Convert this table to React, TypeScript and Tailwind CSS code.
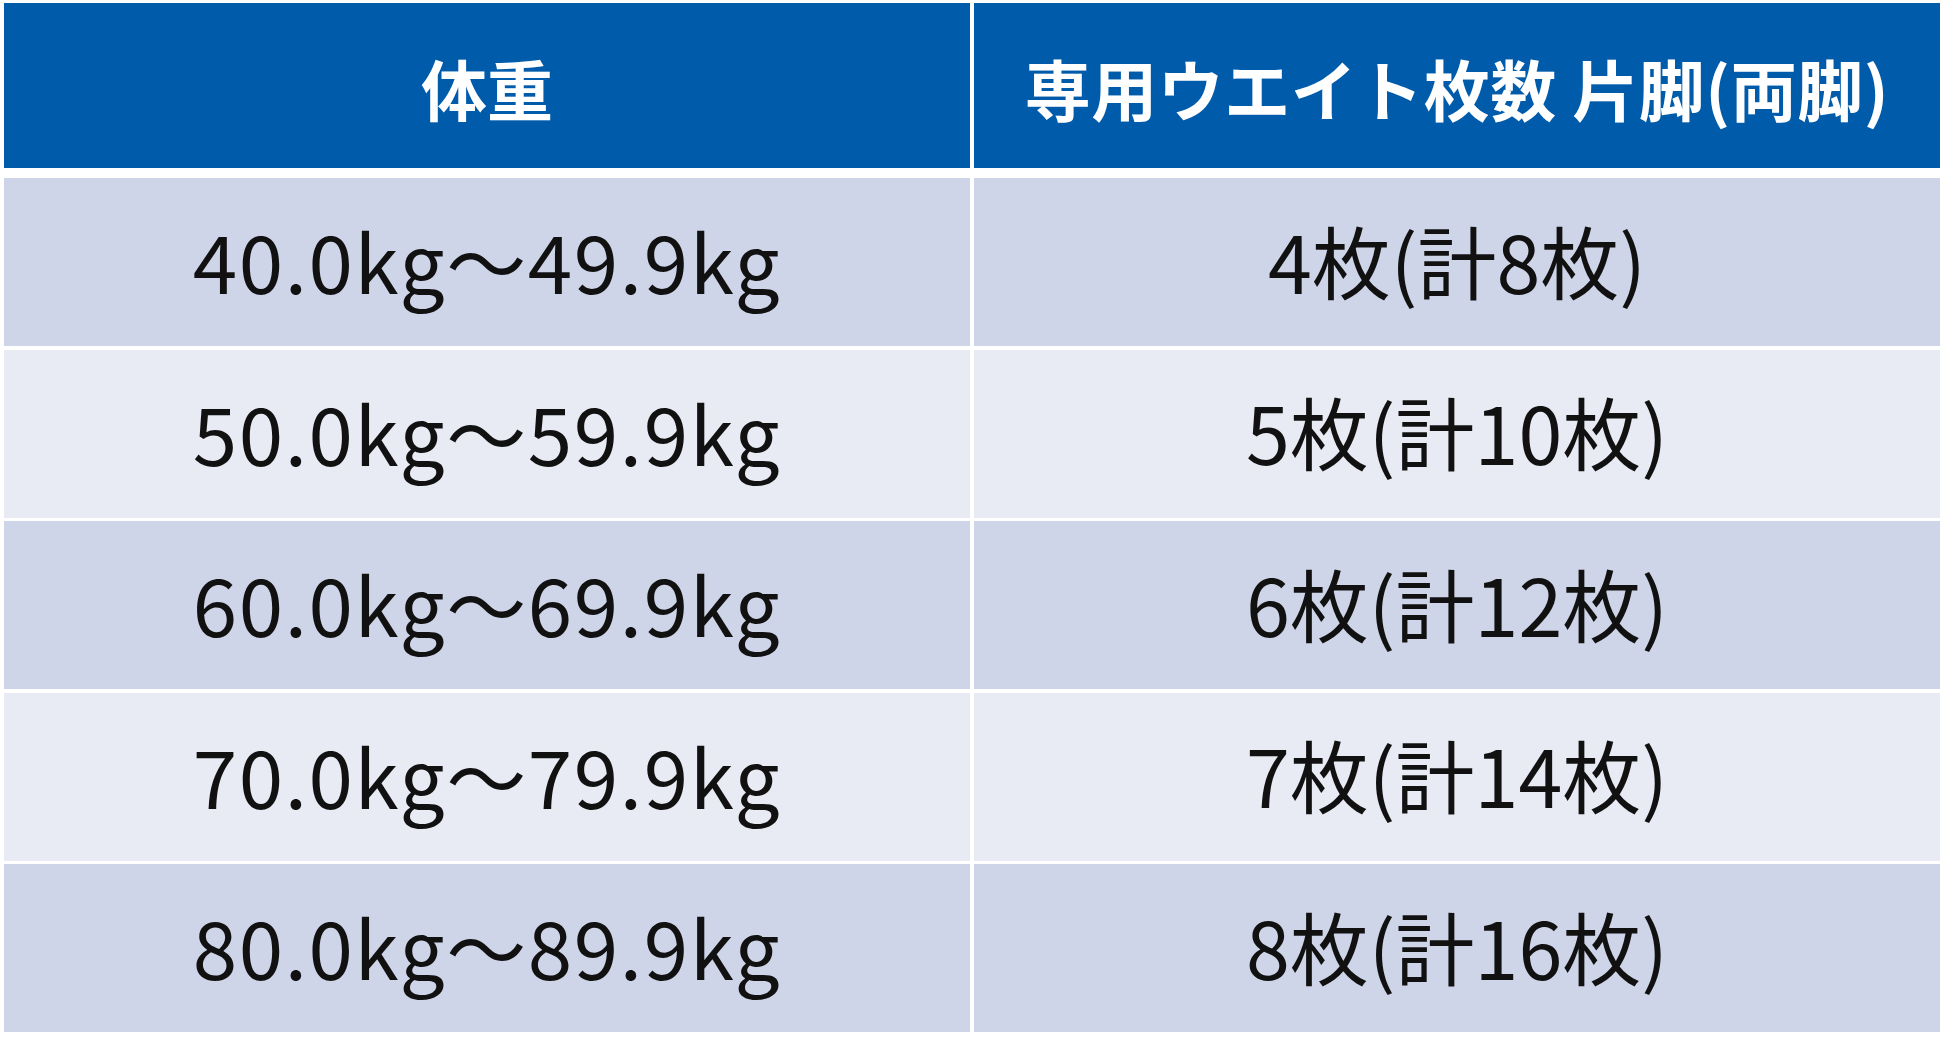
import React from "react";

const rows = [
  { weight: "40.0kg～49.9kg", count: "4枚(計8枚)" },
  { weight: "50.0kg～59.9kg", count: "5枚(計10枚)" },
  { weight: "60.0kg～69.9kg", count: "6枚(計12枚)" },
  { weight: "70.0kg～79.9kg", count: "7枚(計14枚)" },
  { weight: "80.0kg～89.9kg", count: "8枚(計16枚)" },
];

export default function App() {
  return (
    <div className="w-[1950px] h-[1039px] bg-white overflow-hidden font-['Noto_Sans_CJK_JP',sans-serif]">
      <div className="ml-[4px] pt-[3px] w-[1936px] flex flex-col">
        {/* header */}
        <div className="grid grid-cols-2 gap-[4px] h-[165px]">
          <div className="bg-[#005bab] flex items-center justify-center text-white text-[66px] font-bold leading-none pt-[2px]">
            体重
          </div>
          <div className="bg-[#005bab] flex items-center justify-center text-white text-[66px] font-bold leading-none pt-[2px] tracking-[0.5px]">
            専用ウエイト枚数 片脚(両脚)
          </div>
        </div>

        {/* body rows */}
        <div className="mt-[10px] flex flex-col gap-[3.5px]">
          {rows.map((r, i) => {
            const bg = i % 2 === 0 ? "bg-[#cfd5e8]" : "bg-[#e8ebf4]";
            return (
              <div key={r.weight} className="grid grid-cols-2 gap-[4px] h-[168px]">
                <div className={`${bg} flex items-center justify-center text-[#111] text-[80px] leading-none pb-[6px] tracking-[1.6px]`}>
                  {r.weight}
                </div>
                <div className={`${bg} flex items-center justify-center text-[#111] text-[79px] leading-none pb-[6px]`}>
                  {r.count}
                </div>
              </div>
            );
          })}
        </div>
      </div>
    </div>
  );
}
